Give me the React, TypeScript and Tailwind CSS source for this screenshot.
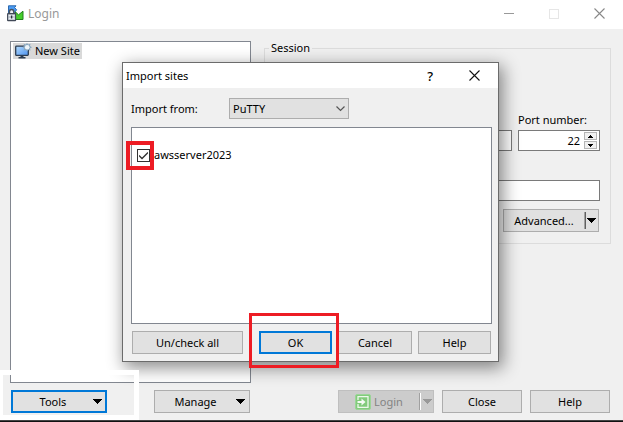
import type { ReactNode } from "react";

const buttonBase =
  "flex h-[23px] items-center justify-center bg-[#e1e1e1] text-black";

function PushButton({
  children,
  primary = false,
  width,
}: {
  children: ReactNode;
  primary?: boolean;
  width: string;
}) {
  return (
    <button
      type="button"
      className={`${buttonBase} ${width} ${
        primary ? "border-2 border-[#0078d7]" : "border border-[#adadad]"
      }`}
    >
      {children}
    </button>
  );
}

function MenuArrow({ color = "#000" }: { color?: string }) {
  return (
    <svg width="9" height="5" viewBox="0 0 9 5" shapeRendering="crispEdges" aria-hidden="true">
      <path d="M0 0H9V1H8V2H7V3H6V4H5V5H4V4H3V3H2V2H1V1H0Z" fill={color} />
    </svg>
  );
}

function MenuButton({ children, primary = false }: { children: ReactNode; primary?: boolean }) {
  return (
    <button
      type="button"
      className={`${buttonBase} w-24 ${
        primary ? "border-2 border-[#0078d7] pr-[3px]" : "border border-[#adadad] pr-1"
      }`}
    >
      <span className="flex-1 text-center">{children}</span>
      <MenuArrow />
    </button>
  );
}

function CloseIcon({ color }: { color: string }) {
  return (
    <svg width="11" height="11" viewBox="0 0 11 11" fill="none" stroke={color} aria-hidden="true">
      <path d="M.5.5l10 10M10.5.5l-10 10" strokeWidth="1.1" />
    </svg>
  );
}

function AppIcon() {
  return (
    <svg width="17" height="17" viewBox="0 0 17 17" aria-hidden="true">
      <path d="M1.5.8H9L7.6 2.6L9.6 4.8L7.5 7.5V9H1.5Z" fill="#4a9cf5" stroke="#2c68ad" />
      <path d="M8.5 7L11.5 9.8L16 6.2V14.5H8.5Z" fill="#46cf2b" stroke="#23801b" />
      <path d="M2.4 9V6.9A2.1 2.2 0 0 1 6.8 6.9V9" fill="#eef2f6" stroke="#4a525e" strokeWidth="1.5" />
      <rect x=".6" y="8.6" width="8" height="7" rx=".4" fill="#c3cad2" stroke="#414957" strokeWidth="1.1" />
      <path d="M1.8 10.5H7.4M1.8 13.5H7.4" stroke="#e8edf2" />
      <path d="M4.6 10.5V13.5" stroke="#29303c" strokeWidth="1.4" />
    </svg>
  );
}

function SiteIcon() {
  return (
    <svg width="17" height="16" viewBox="0 0 17 16" aria-hidden="true">
      <defs>
        <linearGradient id="screen" x1="0" y1="0" x2="1" y2="1">
          <stop offset="0" stopColor="#b4dcff" />
          <stop offset="1" stopColor="#4b91ee" />
        </linearGradient>
      </defs>
      <rect x=".7" y="3.2" width="12.6" height="9.2" rx=".8" fill="url(#screen)" stroke="#2c3c50" strokeWidth="1.3" />
      <path d="M5.5 13H8.5V14H10.5V15.5H3.5V14H5.5Z" fill="#2c3c50" />
      <path
        d="M12 0L13.2 1.6L15.5 .8L15 3L17 4.2L15 5.4L15.5 7.6L13.2 7L12 8.6L10.8 7L8.6 7.6L9.2 5.4L7.5 4.2L9.2 3L8.6 .8L10.8 1.6Z"
        fill="#8aa8c0"
      />
      <circle cx="12.2" cy="4.2" r="2.3" fill="#eef5fa" />
    </svg>
  );
}

function LoginIcon() {
  return (
    <svg width="16" height="16" viewBox="0 0 16 16" fill="none" aria-hidden="true">
      <rect x=".5" y=".5" width="15" height="15" rx="1.5" fill="#82cb7c" stroke="#9bd497" />
      <path d="M3 6V2.7H13V13.3H3V10" stroke="#eef8ec" strokeWidth="1.3" />
      <path d="M2.5 8H7" stroke="#f4fbf3" strokeWidth="2" />
      <path d="M6.5 4.5L10.5 8L6.5 11.5Z" fill="#f4fbf3" />
    </svg>
  );
}

function ImportDialog() {
  return (
    <div
      role="dialog"
      aria-labelledby="import-title"
      className="absolute left-[122px] top-[62px] w-[377px] border border-[#6b6b6b] bg-[#f0f0f0] shadow-[3px_5px_16px_1px_rgba(0,0,0,0.45)]"
    >
      <header className="flex h-[25px] items-center bg-white pl-[3px] pr-[18px]">
        <h2 id="import-title" className="mr-auto">Import sites</h2>
        <button type="button" aria-label="Help" className="mr-9 text-[13px] font-medium">?</button>
        <button type="button" aria-label="Close"><CloseIcon color="#111" /></button>
      </header>
      <div className="pb-[7px] pl-2 pr-[6px] pt-[10px]">
        <div className="flex items-center">
          <label htmlFor="source" className="w-[98px]">Import from:</label>
          <div className="relative">
            <select
              id="source"
              className="block h-[21px] w-[120px] appearance-none border border-[#adadad] bg-[#e1e1e1] pl-[3px]"
            >
              <option>PuTTY</option>
            </select>
            <svg
              className="pointer-events-none absolute right-1 top-2"
              width="9"
              height="6"
              viewBox="0 0 9 6"
              fill="none"
              stroke="#555"
              aria-hidden="true"
            >
              <path d="M.5.5l4 4l4-4" strokeWidth="1.2" />
            </svg>
          </div>
        </div>
        <div className="mt-2 h-[197px] border border-[#828790] bg-white pt-5">
          <label className="relative flex items-center gap-1 pl-[5px]">
            <input
              type="checkbox"
              defaultChecked
              className="peer size-[13px] appearance-none border border-[#333] bg-white"
            />
            <svg
              className="pointer-events-none absolute left-[7px] hidden peer-checked:block"
              width="9"
              height="13"
              viewBox="0 0 9 13"
              fill="none"
              stroke="#333"
              aria-hidden="true"
            >
              <path d="M0 6.5l3 3l6-6" strokeWidth="1.3" />
            </svg>
            awsserver2023
            <span className="pointer-events-none absolute -left-[6px] h-[29px] w-7 border-4 border-[#ed1c24]" />
          </label>
        </div>
        <div className="mt-[7px] flex pl-px pr-px">
          <PushButton width="w-[111px]">Un/check all</PushButton>
          <div className="relative ml-4 mr-[6px]">
            <PushButton width="w-[73px]" primary>OK</PushButton>
            <span className="pointer-events-none absolute -left-[10px] -top-[18px] z-10 h-[55px] w-[90px] border-[3px] border-[#ed1c24]" />
          </div>
          <PushButton width="w-[74px]">Cancel</PushButton>
          <div className="ml-auto">
            <PushButton width="w-[73px]">Help</PushButton>
          </div>
        </div>
      </div>
    </div>
  );
}

export default function App() {
  return (
    <div className="relative flex min-h-screen flex-col bg-[#f0f0f0] font-['Noto_Sans',sans-serif] text-[11px] leading-[14px] text-black">
      <header className="flex h-[29px] items-center bg-white pb-[2px] pl-[7px] pr-[18px]">
        <AppIcon />
        <h1 className="ml-1 mr-auto text-[12px] text-[#999]">Login</h1>
        <div className="flex items-center gap-[35px]">
          <button type="button" aria-label="Minimize" className="h-px w-[10px] bg-[#999]" />
          <button type="button" aria-label="Maximize" disabled className="size-[10px] border border-[#e6e6e6]" />
          <button type="button" aria-label="Close"><CloseIcon color="#888" /></button>
        </div>
      </header>

      <main className="flex flex-1 items-stretch gap-[13px] pl-[10px] pr-3 pt-3">
        <ul className="w-[241px] shrink-0 border border-[#828790] bg-white p-px">
          <li className="ml-px flex h-4 w-[69px] items-center gap-[3px] whitespace-nowrap bg-[#d9d9d9] pl-[2px]">
            <SiteIcon />
            New Site
          </li>
        </ul>
        <fieldset className="h-[203px] min-w-0 flex-1 border border-[#dcdcdc] pl-3 pr-[10px]">
          <legend className="-ml-2 px-[2px]">Session</legend>
          <div className="mt-[58px] flex items-end gap-[6px]">
            <input
              aria-label="Host name"
              className="h-[21px] min-w-0 flex-1 border border-[#7a7a7a] bg-white px-1"
            />
            <div className="w-[82px]">
              <label htmlFor="port" className="mb-[3px] block whitespace-nowrap">Port number:</label>
              <div className="flex h-[21px] items-center border border-[#7a7a7a] bg-white pr-[2px]">
                <input
                  id="port"
                  defaultValue="22"
                  className="min-w-0 flex-1 bg-transparent pr-1 text-right outline-none"
                />
                <span className="flex flex-col gap-px">
                  <button type="button" aria-label="Increase" className="flex h-2 w-[13px] items-center justify-center border border-[#b5b5b5] bg-[#f0f0f0]">
                    <svg width="5" height="3" viewBox="0 0 5 3" shapeRendering="crispEdges" aria-hidden="true"><path d="M2 0H3V1H4V2H5V3H0V2H1V1H2Z" /></svg>
                  </button>
                  <button type="button" aria-label="Decrease" className="flex h-2 w-[13px] items-center justify-center border border-[#b5b5b5] bg-[#f0f0f0]">
                    <svg width="5" height="3" viewBox="0 0 5 3" shapeRendering="crispEdges" aria-hidden="true"><path d="M0 0H5V1H4V2H3V3H2V2H1V1H0Z" /></svg>
                  </button>
                </span>
              </div>
            </div>
          </div>
          <input
            aria-label="User name"
            className="mt-[29px] block h-[21px] w-full border border-[#7a7a7a] bg-white px-1"
          />
          <button
            type="button"
            className={`${buttonBase} ml-auto mr-px mt-2 w-24 border border-[#adadad] pr-[2px]`}
          >
            <span className="flex-1 text-center">Advanced...</span>
            <span className="mr-px h-[17px] w-[2px] border-l border-[#a0a0a0] bg-[#606060]" />
            <MenuArrow />
          </button>
        </fieldset>
      </main>

      <footer className="flex gap-2 pb-[7px] pl-[11px] pr-[13px] pt-[7px]">
        <div className="relative z-10 mr-auto flex gap-[47px]">
          <MenuButton primary>Tools</MenuButton>
          <MenuButton>Manage</MenuButton>
          <span className="pointer-events-none absolute -left-[11px] -top-5 h-[50px] w-[139px] border-y-[5px] border-l-[3px] border-r-[5px] border-white" />
        </div>
        <button
          type="button"
          disabled
          className="flex h-[23px] w-24 items-center border border-[#bfbfbf] bg-[#ccc] pl-4 pr-px text-[#838383]"
        >
          <LoginIcon />
          <span className="ml-[3px] mr-auto">Login</span>
          <span className="mr-[2px] h-[17px] w-[2px] border-l border-[#a0a0a0] bg-white" />
          <MenuArrow color="#999" />
        </button>
        <PushButton width="w-20">Close</PushButton>
        <PushButton width="w-20">Help</PushButton>
      </footer>
      <div className="h-[2px] border-t border-[#444] bg-[#111]" />

      <ImportDialog />
    </div>
  );
}
